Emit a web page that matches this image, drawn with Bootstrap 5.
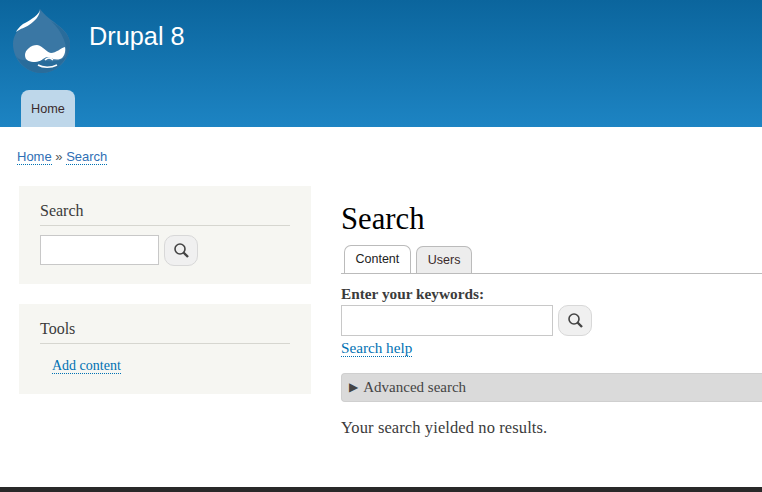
<!DOCTYPE html>
<html lang="en">
<head>
    <meta charset="UTF-8">
    <meta name="viewport" content="width=device-width, initial-scale=1.0">
    <title>Search | Drupal 8</title>
    <link rel="stylesheet" href="https://cdn.jsdelivr.net/npm/bootstrap@5.3.0/dist/css/bootstrap.min.css">
    <script src="https://cdn.jsdelivr.net/npm/bootstrap@5.3.0/dist/js/bootstrap.bundle.min.js"></script>
    <style>
        body { font-family: "Liberation Serif", serif; color: #3b3b3b; background: #fff; height: 492px; overflow: hidden; }
        a { color: #0071b3; text-decoration: none; border-bottom: 1px dotted #0071b3; }
        .site-head { height: 127px; background: linear-gradient(#0b659d, #1d84c3); padding-left: 13px; }
        .site-logo { width: 58px; height: 66px; margin-top: 8px; }
        .site-name { font: 25.3px/29px "Liberation Sans", sans-serif; color: #fff; margin: 22px 0 0 18px; }
        .home-tab { position: absolute; left: 21px; top: 90px; width: 54px; height: 37px; background: #bed7ea; border-radius: 8px 8px 0 0;
            font: 12.7px/38px "Liberation Sans", sans-serif; color: #3a2a2a; text-align: center; }
        .crumbs { font: 13px/16px "Liberation Sans", sans-serif; padding: 22px 0 0 17px; height: 59px; color: #555; }
        .crumbs a { color: #2f6fb5; }
        .side-col { width: 292px; margin-left: 19px; flex: none; }
        .side-block { background: #f6f6f2; padding: 15px 21px 0; margin-bottom: 20px; }
        .block-search { height: 98px; }
        .block-tools { height: 90px; }
        .side-title { font-size: 16px; line-height: 20px; margin: 0; padding-bottom: 4px; border-bottom: 1px solid #d6d6d0; color: #3b3b3b; font-weight: 400; }
        .side-form { margin-top: 9px; }
        .search-box { border: 1px solid #c8c8c8; background: #fff; height: 30px; width: 119px; border-radius: 0; padding: 0; }
        .search-btn { width: 34px; height: 31px; border: 1px solid #d8d8d8; border-radius: 10px; background: #f0f0f0; padding: 0; margin-left: 5px; }
        .search-btn svg { width: 17px; height: 17px; display: block; margin: auto; }
        .tools-row { margin-top: 12px; line-height: 18px; }
        .tools-link { font-size: 14px; line-height: 17px; margin-left: 12px; }
        .main-col { margin-left: 30px; flex: 1; min-width: 0; }
        .page-title { font-size: 30.7px; line-height: 36px; margin: 15px 0 9px; color: #000; font-weight: 400; }
        .tab-row { border-bottom: 1px solid #bbb; height: 28px; padding-left: 3px; font: 12.5px/26px "Liberation Sans", sans-serif; }
        .tab-item { border: 1px solid #bbb; border-bottom: 0; border-radius: 7px 7px 0 0; height: 27px; padding: 0 11px; color: #3a2a2a; background: #ededed; margin-right: 5px; }
        .tab-item.on { background: #fff; height: 28px; color: #222; padding: 0 10.5px; }
        .key-label { font-size: 15.3px; line-height: 18px; font-weight: 700; margin: 11px 0 2px; display: block; color: #3b3b3b; }
        .main-box { width: 212px; height: 31px; }
        .help-link { font-size: 15.2px; line-height: 18px; }
        .adv-bar { background: #dadada; border: 1px solid #cfcfcf; border-right: 0; border-radius: 4px 0 0 4px; height: 29px; margin-top: 13px; padding-left: 7px; font-size: 15px; line-height: 27px; color: #444; }
        .adv-arrow { font-size: 12px; margin-right: 5px; font-family: "DejaVu Sans", sans-serif; vertical-align: 1px; }
        .no-results { font-size: 16.5px; letter-spacing: .1px; line-height: 20px; margin: 16px 0 0; }
        .site-foot { position: absolute; left: 0; right: 0; top: 487px; height: 5px; background: #292929; }
    </style>
</head>
<body>
    <header class="site-head d-flex align-items-start">
        <svg class="site-logo" viewBox="0 0 58 66">
            <path d="M27 1C27 7 20 11 13 15C5 20 0 28 0 36C0 52 13 65 28.5 65C44 65 57 52 57 36C57 20 36 14 27 1Z" fill="#3a77a4"/>
            <path d="M38 13C50 20 57 28 57 36C57 42 55 47 53 50C55 38 50 24 38 13Z" fill="#296c9b"/>
            <path d="M3 48C9 56 18 50 28 52C38 54 48 55 54 47C49 58 40 65 28.5 65C17 65 8 58 3 48Z" fill="#296c9b"/>
            <path d="M27 1C27 6 18 12 10 16C6 19 4 22 3 24C8 20 12 20 16 17C22 13 27 8 27 1Z" fill="#fff"/>
            <path d="M12 47C12 42 18 37 24 37C30 38 33 44 38 45C43 45 48 40 52 39C53 44 51 50 47 51C42 53 37 49 34 49C30 50 28 54 22 54C17 54 12 53 12 47Z" fill="#fff"/>
            <path d="M32 52C35 49 38 50 40 52M25 57C30 60 38 60 44 57" stroke="#fff" stroke-width="1.6" fill="none"/>
        </svg>
        <div class="site-name">Drupal 8</div>
        <div class="home-tab">Home</div>
    </header>

    <div class="crumbs"><a href="#">Home</a> » <a href="#">Search</a></div>

    <div class="d-flex">
        <aside class="side-col">
            <div class="side-block block-search">
                <h2 class="side-title">Search</h2>
                <div class="d-flex align-items-start side-form">
                    <input class="search-box" type="text">
                    <button class="search-btn" type="button">
                        <svg viewBox="0 0 17 17"><circle cx="7" cy="7" r="5" fill="none" stroke="#444" stroke-width="1.6"/><path d="M10.5 10.5L15 15" stroke="#444" stroke-width="2.4"/></svg>
                    </button>
                </div>
            </div>
            <div class="side-block block-tools">
                <h2 class="side-title">Tools</h2>
                <div class="tools-row"><a class="tools-link" href="#">Add content</a></div>
            </div>
        </aside>
        <main class="main-col">
            <h1 class="page-title">Search</h1>
            <div class="tab-row d-flex align-items-end">
                <div class="tab-item on">Content</div>
                <div class="tab-item">Users</div>
            </div>
            <label class="key-label">Enter your keywords:</label>
            <div class="d-flex align-items-start">
                <input class="search-box main-box" type="text">
                <button class="search-btn" type="button">
                    <svg viewBox="0 0 17 17"><circle cx="7" cy="7" r="5" fill="none" stroke="#444" stroke-width="1.6"/><path d="M10.5 10.5L15 15" stroke="#444" stroke-width="2.4"/></svg>
                </button>
            </div>
            <a class="help-link" href="#">Search help</a>
            <div class="adv-bar"><span class="adv-arrow">▶</span>Advanced search</div>
            <p class="no-results">Your search yielded no results.</p>
        </main>
    </div>
    <footer class="site-foot"></footer>
</body>
</html>
